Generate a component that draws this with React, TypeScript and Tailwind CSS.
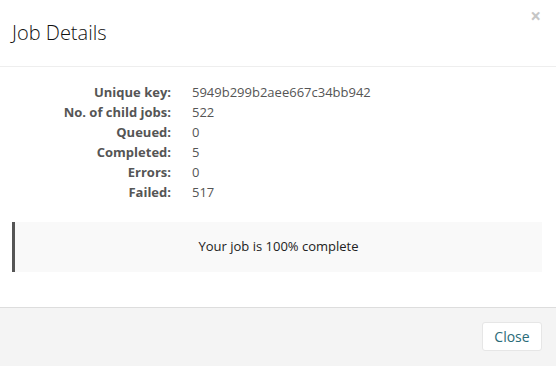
export default function App() {
  const rows: [string, string][] = [
    ["Unique key:", "5949b299b2aee667c34bb942"],
    ["No. of child jobs:", "522"],
    ["Queued:", "0"],
    ["Completed:", "5"],
    ["Errors:", "0"],
    ["Failed:", "517"],
  ]

  return (
    <div className="w-[556px] h-[366px] bg-white flex flex-col text-[#333]" style={{ fontFamily: '"Open Sans", sans-serif' }}>
      <div className="h-[67px] border-b border-[#eeeeee] flex items-start justify-between px-3 shrink-0">
        <h4 className="text-[20px] font-light leading-none pt-[23px] text-[#111]">Job Details</h4>
        <button className="text-[#c6c6c6] text-[19px] font-bold leading-none pt-[7px] pr-[3px]">×</button>
      </div>
      <div className="flex-1 pl-3 pr-[14px] pt-[15px]">
        <div className="flex flex-col">
          {rows.map(([k, v]) => (
            <div key={k} className="flex text-[13px] leading-[20px]">
              <div className="w-[159px] text-right font-bold text-[#555]">{k}</div>
              <div className="pl-[21px] text-[#555]">{v}</div>
            </div>
          ))}
        </div>
        <div className="mt-[20px] h-[50px] bg-[#f9f9f9] border-l-[3px] border-[#555] flex items-center justify-center text-[13px] text-[#222]">
          Your job is 100% complete
        </div>
      </div>
      <div className="h-[59px] border-t border-[#dddddd] bg-[#f4f4f4] flex items-center justify-end pr-[14px] shrink-0">
        <button className="h-[29px] w-[60px] bg-white border border-[#e6e6e6] rounded-[3px] text-[14px] text-[#2a6b78] mt-[-1px]">Close</button>
      </div>
    </div>
  )
}
